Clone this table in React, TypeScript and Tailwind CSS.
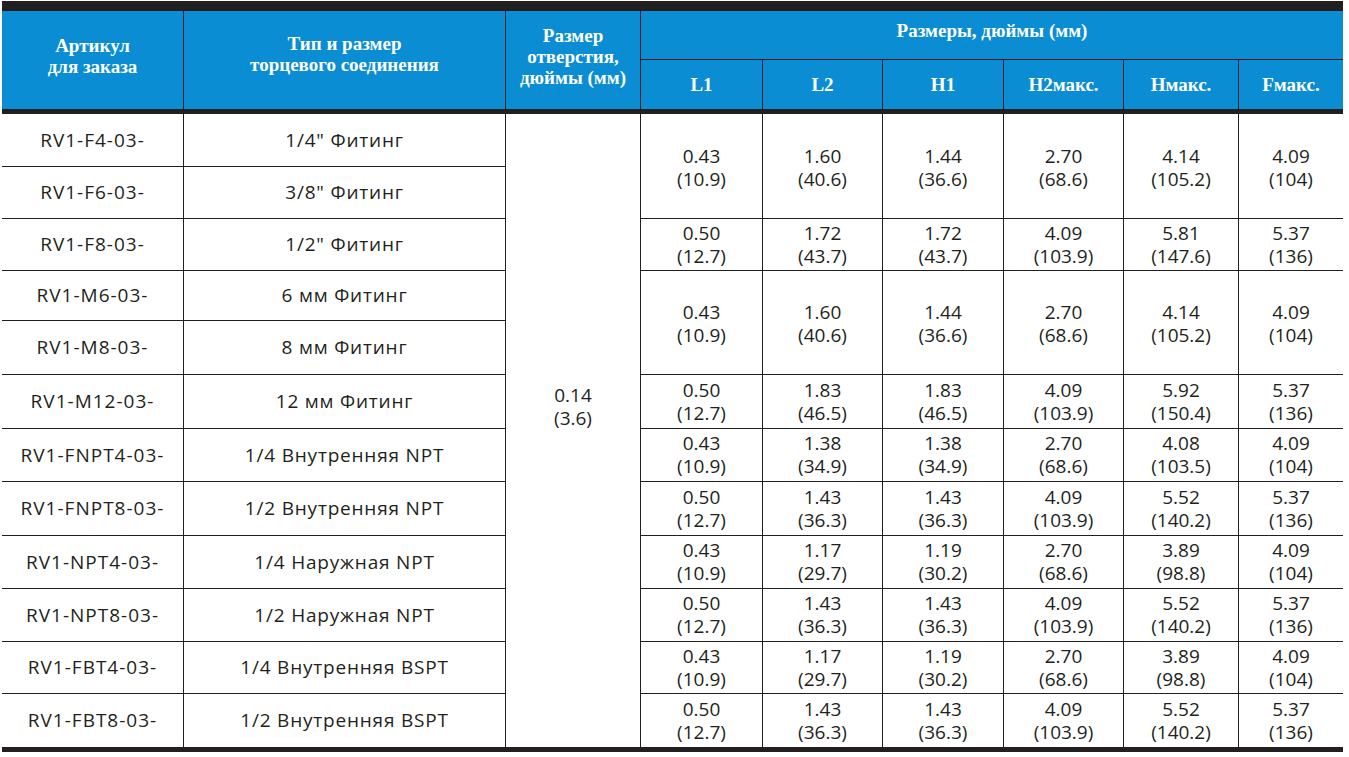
const cols = "grid-cols-[181px_321px_134px_121px_119px_120px_119px_114px_104px]";

type Row = { art: string; type: string };

const rows: Row[] = [
  { art: "RV1-F4-03-", type: "1/4\" Фитинг" },
  { art: "RV1-F6-03-", type: "3/8\" Фитинг" },
  { art: "RV1-F8-03-", type: "1/2\" Фитинг" },
  { art: "RV1-M6-03-", type: "6 мм Фитинг" },
  { art: "RV1-M8-03-", type: "8 мм Фитинг" },
  { art: "RV1-M12-03-", type: "12 мм Фитинг" },
  { art: "RV1-FNPT4-03-", type: "1/4 Внутренняя NPT" },
  { art: "RV1-FNPT8-03-", type: "1/2 Внутренняя NPT" },
  { art: "RV1-NPT4-03-", type: "1/4 Наружная NPT" },
  { art: "RV1-NPT8-03-", type: "1/2 Наружная NPT" },
  { art: "RV1-FBT4-03-", type: "1/4 Внутренняя BSPT" },
  { art: "RV1-FBT8-03-", type: "1/2 Внутренняя BSPT" },
];

// one entry per data row group: [start row, span, values]
const a = ["0.43", "(10.9)", "1.60", "(40.6)", "1.44", "(36.6)", "2.70", "(68.6)", "4.14", "(105.2)", "4.09", "(104)"];
const groups: { start: number; span: number; v: string[] }[] = [
  { start: 1, span: 2, v: a },
  { start: 3, span: 1, v: ["0.50", "(12.7)", "1.72", "(43.7)", "1.72", "(43.7)", "4.09", "(103.9)", "5.81", "(147.6)", "5.37", "(136)"] },
  { start: 4, span: 2, v: a },
  { start: 6, span: 1, v: ["0.50", "(12.7)", "1.83", "(46.5)", "1.83", "(46.5)", "4.09", "(103.9)", "5.92", "(150.4)", "5.37", "(136)"] },
  { start: 7, span: 1, v: ["0.43", "(10.9)", "1.38", "(34.9)", "1.38", "(34.9)", "2.70", "(68.6)", "4.08", "(103.5)", "4.09", "(104)"] },
  { start: 8, span: 1, v: ["0.50", "(12.7)", "1.43", "(36.3)", "1.43", "(36.3)", "4.09", "(103.9)", "5.52", "(140.2)", "5.37", "(136)"] },
  { start: 9, span: 1, v: ["0.43", "(10.9)", "1.17", "(29.7)", "1.19", "(30.2)", "2.70", "(68.6)", "3.89", "(98.8)", "4.09", "(104)"] },
  { start: 10, span: 1, v: ["0.50", "(12.7)", "1.43", "(36.3)", "1.43", "(36.3)", "4.09", "(103.9)", "5.52", "(140.2)", "5.37", "(136)"] },
  { start: 11, span: 1, v: ["0.43", "(10.9)", "1.17", "(29.7)", "1.19", "(30.2)", "2.70", "(68.6)", "3.89", "(98.8)", "4.09", "(104)"] },
  { start: 12, span: 1, v: ["0.50", "(12.7)", "1.43", "(36.3)", "1.43", "(36.3)", "4.09", "(103.9)", "5.52", "(140.2)", "5.37", "(136)"] },
];

const rowStart = ["row-start-1", "row-start-2", "row-start-3", "row-start-4", "row-start-5", "row-start-6", "row-start-7", "row-start-8", "row-start-9", "row-start-10", "row-start-11", "row-start-12"];
const colStart = ["col-start-4", "col-start-5", "col-start-6", "col-start-7", "col-start-8", "col-start-9"];

const Head = ({ children, className = "" }: { children: React.ReactNode; className?: string }) => (
  <div className={`flex items-center justify-center bg-[#0a8dd2] text-center text-[19px] font-bold leading-[21px] text-white ${className}`}>
    {children}
  </div>
);

const Cell = ({ children, className = "" }: { children: React.ReactNode; className?: string }) => (
  <div className={`flex items-center justify-center bg-white text-center ${className}`}>{children}</div>
);

export default function App() {
  return (
    <div className="min-h-[757px] bg-white pl-[2px] pt-px">
      <div className="w-[1341px]">
        <div className="h-[10px] bg-[#231f20]" />

        <div
          className={`grid ${cols} grid-rows-[48px_49px] gap-px bg-[#231f20]`}
          style={{ fontFamily: '"Liberation Serif", "DejaVu Serif", serif' }}
        >
          <Head className="row-span-2 pb-[8px]">
            Артикул
            <br />
            для заказа
          </Head>
          <Head className="row-span-2 pb-[12px] leading-[19px]">
            Тип и размер
            <br />
            торцевого соединения
          </Head>
          <Head className="row-span-2 pb-[8px]">
            Размер
            <br />
            отверстия,
            <br />
            дюймы (мм)
          </Head>
          <Head className="col-span-6 pb-[10px]">Размеры, дюймы (мм)</Head>
          <Head>L1</Head>
          <Head>L2</Head>
          <Head>H1</Head>
          <Head>H2макс.</Head>
          <Head>Hмакс.</Head>
          <Head>Fмакс.</Head>
        </div>

        <div className="h-[5px] bg-[#231f20]" />

        <div
          className={`grid ${cols} grid-rows-[52px_51px_51px_49px_53px_53px_52px_53px_52px_52px_51px_53px] gap-px bg-[#231f20] text-[19px] leading-[23px] text-[#231f20]`}
          style={{ fontFamily: '"Open Sans", "Noto Sans", sans-serif' }}
        >
          {rows.map((r, i) => (
            <Cell key={"a" + i} className={`col-start-1 ${rowStart[i]} tracking-[1px]`}>
              {r.art}
            </Cell>
          ))}
          {rows.map((r, i) => (
            <Cell key={"t" + i} className={`col-start-2 ${rowStart[i]} tracking-[0.8px]`}>
              {r.type}
            </Cell>
          ))}
          <Cell className="col-start-3 row-start-1 row-span-12 flex-col pb-[48px]">
            <span>0.14</span>
            <span>(3.6)</span>
          </Cell>
          {groups.map((g) =>
            colStart.map((c, j) => (
              <Cell
                key={g.start + "-" + j}
                className={`${c} ${rowStart[g.start - 1]} ${g.span === 2 ? "row-span-2 pt-[3px]" : ""} flex-col`}
              >
                <span>{g.v[j * 2]}</span>
                <span>{g.v[j * 2 + 1]}</span>
              </Cell>
            ))
          )}
        </div>

        <div className="h-[5px] bg-[#231f20]" />
      </div>
    </div>
  );
}
